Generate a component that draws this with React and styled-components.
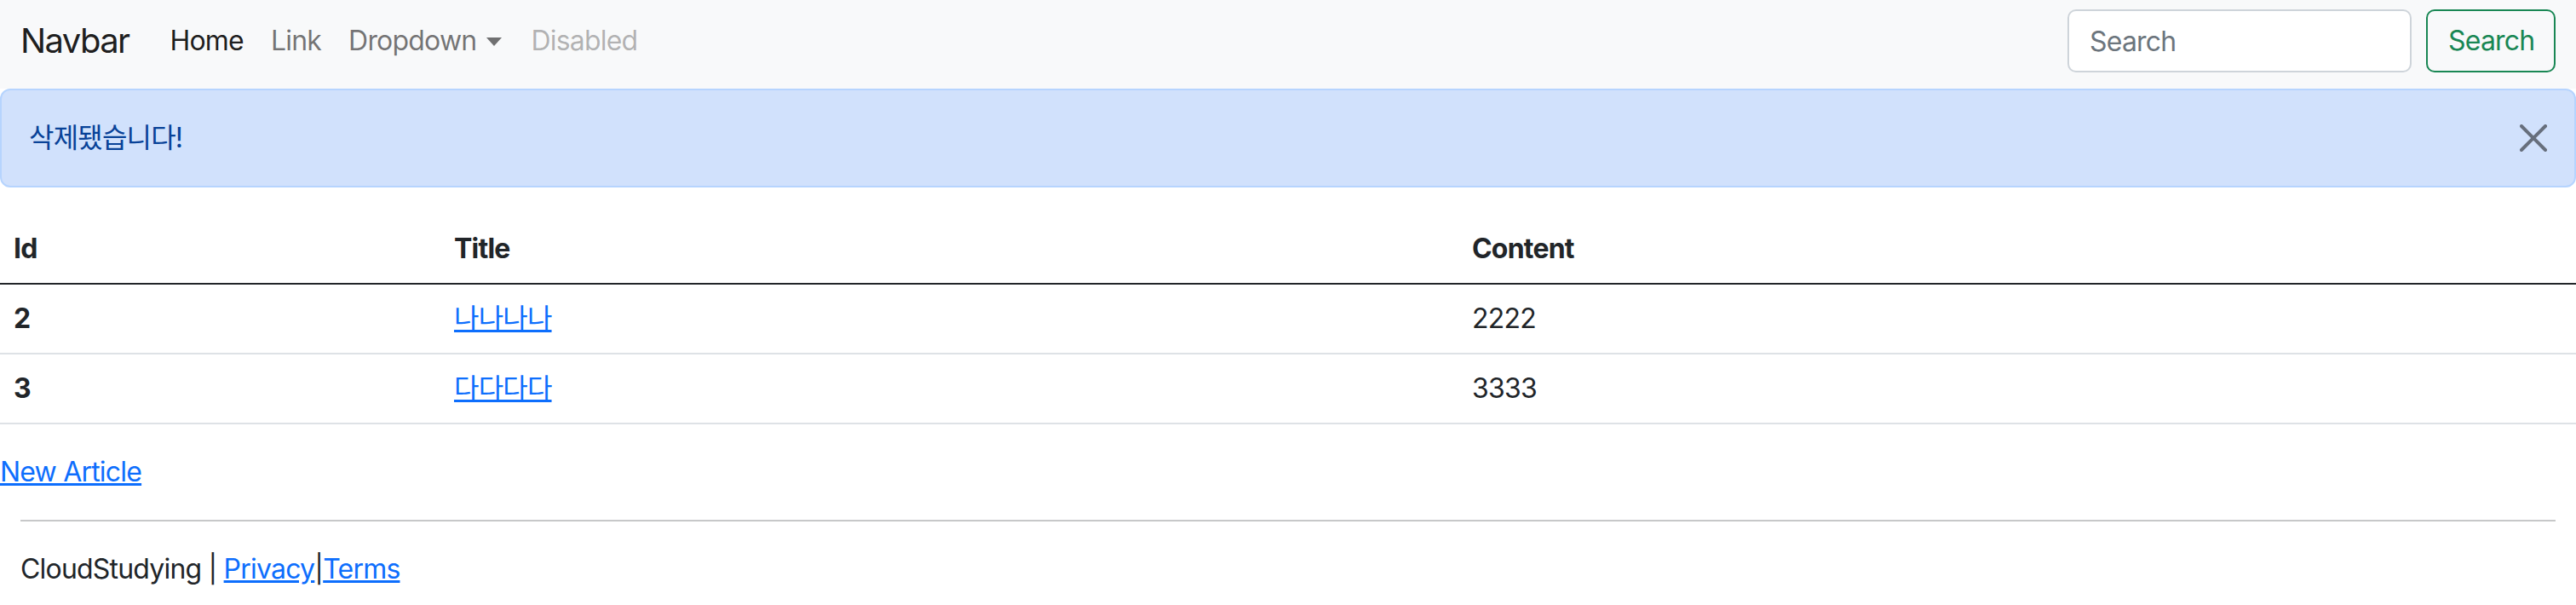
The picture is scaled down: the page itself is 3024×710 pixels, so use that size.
import React from "react";
import styled, { createGlobalStyle } from "styled-components";

const GlobalStyle = createGlobalStyle`
  * {
    box-sizing: border-box;
  }
  body {
    margin: 0;
    font-family: Inter, "Noto Sans CJK KR", sans-serif;
    font-size: 32px;
    line-height: 48px;
    letter-spacing: -0.025em;
    color: #212529;
    background: #fff;
  }
`;

const Nav = styled.nav`
  display: flex;
  align-items: center;
  height: 104px;
  padding: 11px 24px 19px;
  background-color: #f8f9fa;
`;

const Brand = styled.a`
  font-size: 40px;
  line-height: 60px;
  letter-spacing: -0.04em;
  margin-right: 32px;
  color: rgba(0, 0, 0, 0.9);
  text-decoration: none;
`;

const Menu = styled.ul`
  display: flex;
  list-style: none;
  margin: 0;
  padding: 0;
`;

const MenuLink = styled.a`
  display: block;
  padding: 0 16px;
  color: ${(p) =>
    p.$active
      ? "rgba(0, 0, 0, 0.9)"
      : p.$disabled
      ? "rgba(0, 0, 0, 0.3)"
      : "rgba(0, 0, 0, 0.55)"};
  text-decoration: none;
  ${(p) =>
    p.$toggle &&
    `
    &::after {
      content: "";
      display: inline-block;
      margin-left: 12px;
      margin-right: 2px;
      vertical-align: 5px;
      border-top: 10px solid;
      border-left: 9px solid transparent;
      border-right: 9px solid transparent;
    }
  `}
`;

const SearchForm = styled.form`
  display: flex;
  gap: 17px;
  margin-left: auto;
`;

const SearchInput = styled.input`
  width: 404px;
  height: 74px;
  padding: 0 24px;
  font: inherit;
  letter-spacing: inherit;
  color: #212529;
  background: #fff;
  border: 2px solid #ced4da;
  border-radius: 10px;
  &::placeholder {
    color: #6c757d;
  }
`;

const OutlineButton = styled.button`
  width: 152px;
  height: 74px;
  padding: 0 24px;
  font: inherit;
  letter-spacing: inherit;
  color: #198754;
  background: transparent;
  border: 2px solid #198754;
  border-radius: 10px;
`;

const Alert = styled.div`
  display: flex;
  align-items: center;
  justify-content: space-between;
  margin-bottom: 32px;
  padding: 32px 32px;
  color: #084298;
  background-color: #d1e1fc;
  border: 2px solid #b6d4fe;
  border-radius: 12px;
`;

const CloseButton = styled.button`
  display: flex;
  width: 32px;
  height: 32px;
  padding: 0;
  border: 0;
  background: transparent;
  color: #000;
  opacity: 0.5;
`;

const Table = styled.table`
  width: 100%;
  border-collapse: collapse;
  margin-bottom: 32px;
`;

const HeadCell = styled.th`
  padding: 16px;
  text-align: left;
  font-weight: 700;
  border-bottom: 2px solid ${(p) => (p.$head ? "#212529" : "#dee2e6")};
`;

const Cell = styled.td`
  padding: 16px;
  border-bottom: 2px solid #dee2e6;
`;

const Link = styled.a`
  color: #0d6efd;
  text-decoration: underline;
`;

const Footer = styled.footer`
  padding: 0 24px;
`;

const Rule = styled.hr`
  margin: 32px 0;
  border: 0;
  border-top: 2px solid;
  color: #212529;
  opacity: 0.25;
`;

const FooterText = styled.p`
  margin: 0 0 32px;
`;

const articles = [
  { id: 2, title: "나나나나", content: "2222" },
  { id: 3, title: "다다다다", content: "3333" },
];

function App() {
  return (
    <>
      <GlobalStyle />
      <Nav>
        <Brand href="#">Navbar</Brand>
        <Menu>
          <li>
            <MenuLink href="#" $active>
              Home
            </MenuLink>
          </li>
          <li>
            <MenuLink href="#">Link</MenuLink>
          </li>
          <li>
            <MenuLink href="#" $toggle>
              Dropdown
            </MenuLink>
          </li>
          <li>
            <MenuLink $disabled>Disabled</MenuLink>
          </li>
        </Menu>
        <SearchForm onSubmit={(e) => e.preventDefault()}>
          <SearchInput type="search" placeholder="Search" />
          <OutlineButton type="submit">Search</OutlineButton>
        </SearchForm>
      </Nav>

      <Alert>
        <span>삭제됐습니다!</span>
        <CloseButton aria-label="Close">
          <svg width="32" height="32" viewBox="0 0 16 16" fill="currentColor">
            <path d="M.293.293a1 1 0 0 1 1.414 0L8 6.586 14.293.293a1 1 0 1 1 1.414 1.414L9.414 8l6.293 6.293a1 1 0 0 1-1.414 1.414L8 9.414l-6.293 6.293a1 1 0 0 1-1.414-1.414L6.586 8 .293 1.707a1 1 0 0 1 0-1.414z" />
          </svg>
        </CloseButton>
      </Alert>

      <Table>
        <thead>
          <tr>
            <HeadCell $head style={{ width: 517 }}>
              Id
            </HeadCell>
            <HeadCell $head style={{ width: 1195 }}>
              Title
            </HeadCell>
            <HeadCell $head>Content</HeadCell>
          </tr>
        </thead>
        <tbody>
          {articles.map((a) => (
            <tr key={a.id}>
              <HeadCell scope="row">{a.id}</HeadCell>
              <Cell>
                <Link href="#">{a.title}</Link>
              </Cell>
              <Cell>{a.content}</Cell>
            </tr>
          ))}
        </tbody>
      </Table>

      <Link href="#">New Article</Link>

      <Footer>
        <Rule />
        <FooterText>
          CloudStudying | <Link href="#">Privacy</Link>|<Link href="#">Terms</Link>
        </FooterText>
      </Footer>
    </>
  );
}

export default App;
